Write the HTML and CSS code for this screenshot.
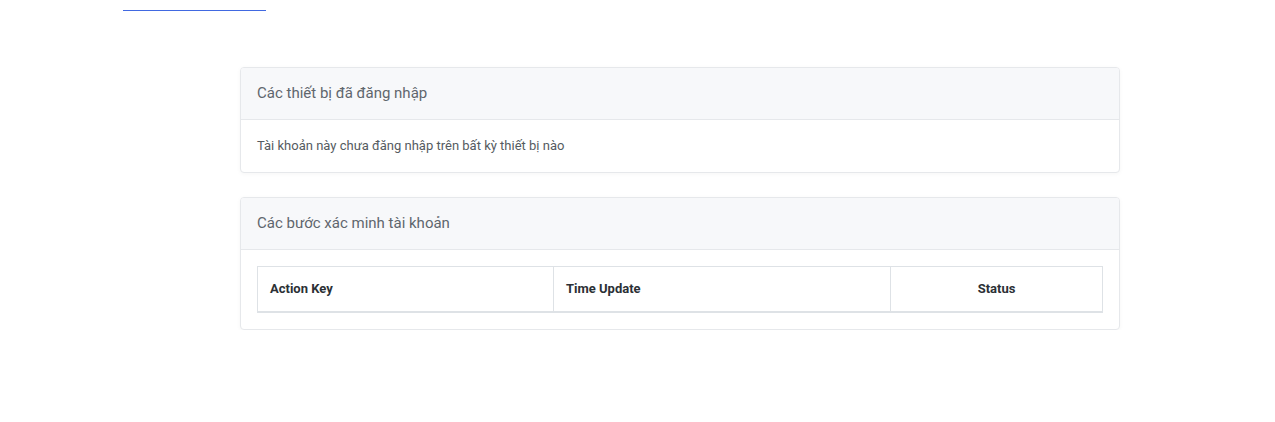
FILE: index.html
```html
<!DOCTYPE html>
<html lang="vi">
<head>
<meta charset="utf-8">
<title>Thiết bị</title>
<link rel="stylesheet" href="styles.css">
</head>
<body>
<div class="tabs"><div class="tab-active"></div></div>
<main class="main">
  <section class="card">
    <div class="card-header">Các thiết bị đã đăng nhập</div>
    <div class="card-body">
      <p class="empty">Tài khoản này chưa đăng nhập trên bất kỳ thiết bị nào</p>
    </div>
  </section>
  <section class="card">
    <div class="card-header">Các bước xác minh tài khoản</div>
    <div class="card-body">
      <table class="table">
        <thead>
          <tr>
            <th class="col-key">Action Key</th>
            <th class="col-time">Time Update</th>
            <th class="col-status">Status</th>
          </tr>
        </thead>
      </table>
    </div>
  </section>
</main>
</body>
</html>
```
FILE: styles.css
```css
* { box-sizing: border-box; }
html, body { margin: 0; padding: 0; background: #fff; }
body {
  font-family: Roboto, "Liberation Sans", Arial, sans-serif;
  color: #212529;
}
.tabs { padding-left: 123px; padding-top: 10px; height: 11px; }
.tab-active { width: 143px; height: 1px; background: #4169e1; }
.main {
  padding: 56px 0 0 240px;
  display: flex;
  flex-direction: column;
  gap: 24px;
}
.card {
  width: 880px;
  border: 1px solid #e6e8eb;
  border-radius: 4px;
  background: #fff;
  box-shadow: 0 1px 4px rgba(0,0,0,0.04);
  overflow: hidden;
}
.card-header {
  background: #f7f8fa;
  border-bottom: 1px solid #e6e8eb;
  height: 52px;
  padding: 0 16px 1px;
  display: flex;
  align-items: center;
  font-size: 15px;
  color: #5f666d;
}
.card-body { padding: 16px; }
.empty {
  margin: 0;
  font-size: 13px;
  line-height: 20px;
  color: #555b61;
}
.table {
  width: 846px;
  border-collapse: collapse;
  table-layout: fixed;
}
.table th {
  height: 45px;
  border: 1px solid #dee2e6;
  border-bottom: 2px solid #dee2e6;
  padding: 0 12px;
  font-size: 13px;
  font-weight: 700;
  color: #2b3035;
  text-align: left;
}
.col-key { width: 296px; }
.col-time { width: 337px; }
.table th.col-status { text-align: center; }
```
